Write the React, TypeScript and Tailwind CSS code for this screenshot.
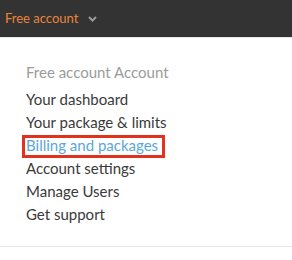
export default function App() {
    const items = [
        { label: 'Your dashboard' },
        { label: 'Your package & limits' },
        { label: 'Billing and packages', active: true },
        { label: 'Account settings' },
        { label: 'Manage Users' },
        { label: 'Get support' },
    ];

    return (
        <div className="w-[292px] h-[260px] bg-white overflow-hidden" style={{ fontFamily: 'Lato, sans-serif' }}>
            {/* Top bar */}
            <header className="h-[38px] bg-[#333333] border-b border-[#e6e6e6] flex items-center pl-[5px]">
                <span className="text-[13px] text-[#e8843a]">Free account</span>
                <svg className="ml-[10px] mt-[1px]" width="9" height="6" viewBox="0 0 9 6">
                    <path d="M1 1l3.5 3.5L8 1" fill="none" stroke="#9a9a9a" strokeWidth="2" />
                </svg>
            </header>

            {/* Menu */}
            <nav className="pt-[23px] pl-[26px] h-[209px] border-b border-[#e8e8e8]">
                <div className="text-[15px] text-[#9b9b9b] leading-[23px] mb-[4px]">Free account Account</div>
                <ul className="flex flex-col">
                    {items.map((item) => (
                        <li
                            key={item.label}
                            className={`text-[15px] leading-[23px] ${item.active ? 'text-[#5aa7dc]' : 'text-[#3a3a3a]'}`}
                        >
                            <span className="relative">
                                {item.label}
                                {item.active && (
                                    <span className="absolute -left-[4px] -right-[7px] -top-[1px] -bottom-[4px] border-[3px] border-[#e2321f]" />
                                )}
                            </span>
                        </li>
                    ))}
                </ul>
            </nav>
        </div>
    );
}
